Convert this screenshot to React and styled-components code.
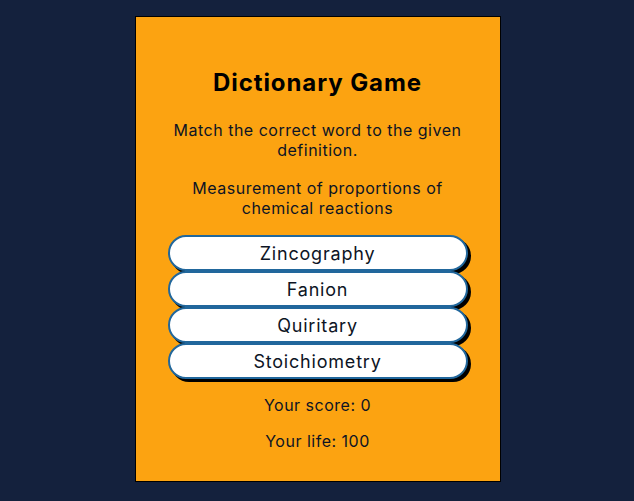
import React from "react";
import styled, { createGlobalStyle } from "styled-components";

const Global = createGlobalStyle`
  html, body { margin: 0; padding: 0; background: #14213d; }
  body { font-family: "Inter", "Liberation Sans", sans-serif; }
  * { box-sizing: border-box; }
`;

const Page = styled.div`
  min-height: 501px;
  padding-top: 16px;
  display: flex;
  justify-content: center;
`;

const Card = styled.div`
  width: 366px;
  height: 466px;
  margin-left: 1px;
  background: #fca311;
  border: 1px solid #000;
  padding: 51px 32px 0;
  display: flex;
  flex-direction: column;
  align-items: center;
  text-align: center;
  color: #000;
`;

const Title = styled.h1`
  margin: 0;
  font-size: 24px;
  line-height: 30px;
  font-weight: 700;
  letter-spacing: 0.9px;
`;

const Text = styled.p`
  margin: ${(p) => p.$mt}px 0 0;
  font-size: 16px;
  line-height: 20px;
  font-weight: 400;
  letter-spacing: 0.5px;
  color: #0d1424;
`;

const Options = styled.div`
  margin-top: 17px;
  width: 300px;
  display: flex;
  flex-direction: column;
`;

const Option = styled.button`
  height: 36px;
  width: 100%;
  background: #fff;
  border: 2px solid #21679c;
  border-radius: 18px;
  box-shadow: 3px 3px 0 #000;
  font-family: inherit;
  font-size: 18px;
  letter-spacing: 0.8px;
  color: #0d1424;
  cursor: pointer;
  padding: 0;
`;

const words = ["Zincography", "Fanion", "Quiritary", "Stoichiometry"];

export default function App() {
  return (
    <>
      <Global />
      <Page>
        <Card>
          <Title>Dictionary Game</Title>
          <Text $mt={22}>Match the correct word to the given definition.</Text>
          <Text $mt={18}>Measurement of proportions of chemical reactions</Text>
          <Options>
            {words.map((w) => (
              <Option key={w}>{w}</Option>
            ))}
          </Options>
          <Text $mt={16}>Your score: 0</Text>
          <Text $mt={16}>Your life: 100</Text>
        </Card>
      </Page>
    </>
  );
}
